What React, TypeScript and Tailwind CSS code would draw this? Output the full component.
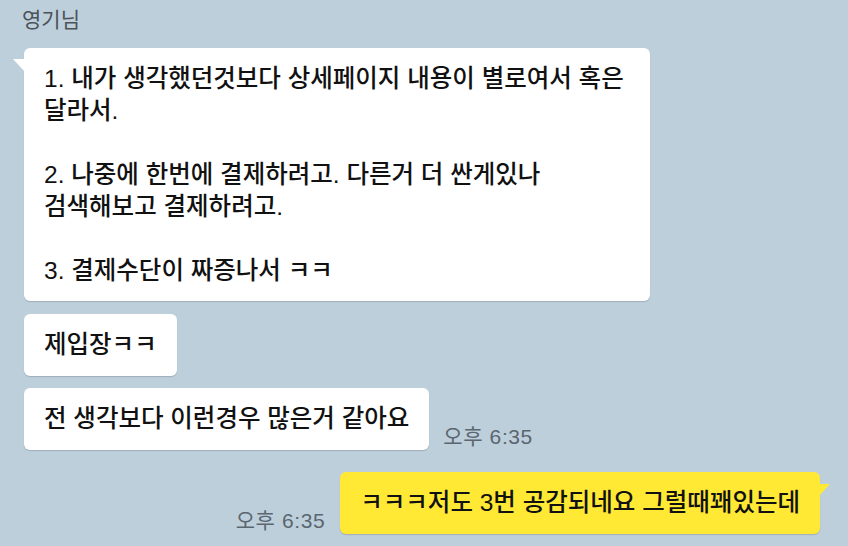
import React, { FC, ReactNode } from "react";

const font = {
  fontFamily: '"Liberation Sans", "Noto Sans CJK KR", sans-serif',
};

interface BubbleProps {
  className?: string;
  tail?: "left" | "right";
  children: ReactNode;
}

const Bubble: FC<BubbleProps> = ({ className = "", tail, children }) => {
  return (
    <div
      className={`${className} relative rounded-[6px] shadow-[0_1px_1px_rgba(0,0,0,0.16)] text-[24.5px] leading-[32px] font-medium text-[#111]`}
    >
      {tail === "left" && (
        <svg
          width="14"
          height="14"
          viewBox="0 0 14 14"
          className="absolute left-[-12px] top-[11px]"
        >
          <path d="M1 0 L13 0 L13 13 Z" fill="#ffffff" />
        </svg>
      )}
      {tail === "right" && (
        <svg
          width="14"
          height="14"
          viewBox="0 0 14 14"
          className="absolute right-[-12px] top-[12px]"
        >
          <path d="M0 0 L12 0 L0 13 Z" fill="#ffe934" />
        </svg>
      )}
      {children}
    </div>
  );
};

const Time: FC<{ className?: string }> = ({ className = "" }) => (
  <span className={`${className} text-[21px] leading-[24px] text-[#5b6670] tracking-[0.6px] whitespace-nowrap`}>
    오후 6:35
  </span>
);

const App: FC = () => {
  return (
    <div className="w-[848px] h-[546px] bg-[#bdcfdb] overflow-hidden" style={font}>
      <div className="pl-[22px] pt-2 text-[21px] leading-[24px] text-[#4b5258]">영기님</div>

      <div className="pl-6 mt-4 flex flex-col items-start">
        <Bubble tail="left" className="bg-white w-[626px] pl-5 pr-4 pt-[15px] pb-[14px]">
          <div>1. 내가 생각했던것보다 상세페이지 내용이 별로여서 혹은</div>
          <div>달라서.</div>
          <div>&nbsp;</div>
          <div>2. 나중에 한번에 결제하려고. 다른거 더 싼게있나</div>
          <div>검색해보고 결제하려고.</div>
          <div>&nbsp;</div>
          <div>3. 결제수단이 짜증나서 ㅋㅋ</div>
        </Bubble>

        <Bubble className="bg-white mt-[13px] px-5 py-[15px]">제입장ㅋㅋ</Bubble>

        <div className="mt-3 flex items-end">
          <Bubble className="bg-white px-5 py-[15px]">전 생각보다 이런경우 많은거 같아요</Bubble>
          <Time className="ml-[14px] mb-[1px]" />
        </div>
      </div>

      <div className="mt-[22px] pr-7 flex justify-end items-end">
        <Time className="mr-[15px] mb-[1px]" />
        <Bubble tail="right" className="bg-[#ffe934] px-5 py-[15px]">
          ㅋㅋㅋ저도 3번 공감되네요 그럴때꽤있는데
        </Bubble>
      </div>
    </div>
  );
};

export default App;
